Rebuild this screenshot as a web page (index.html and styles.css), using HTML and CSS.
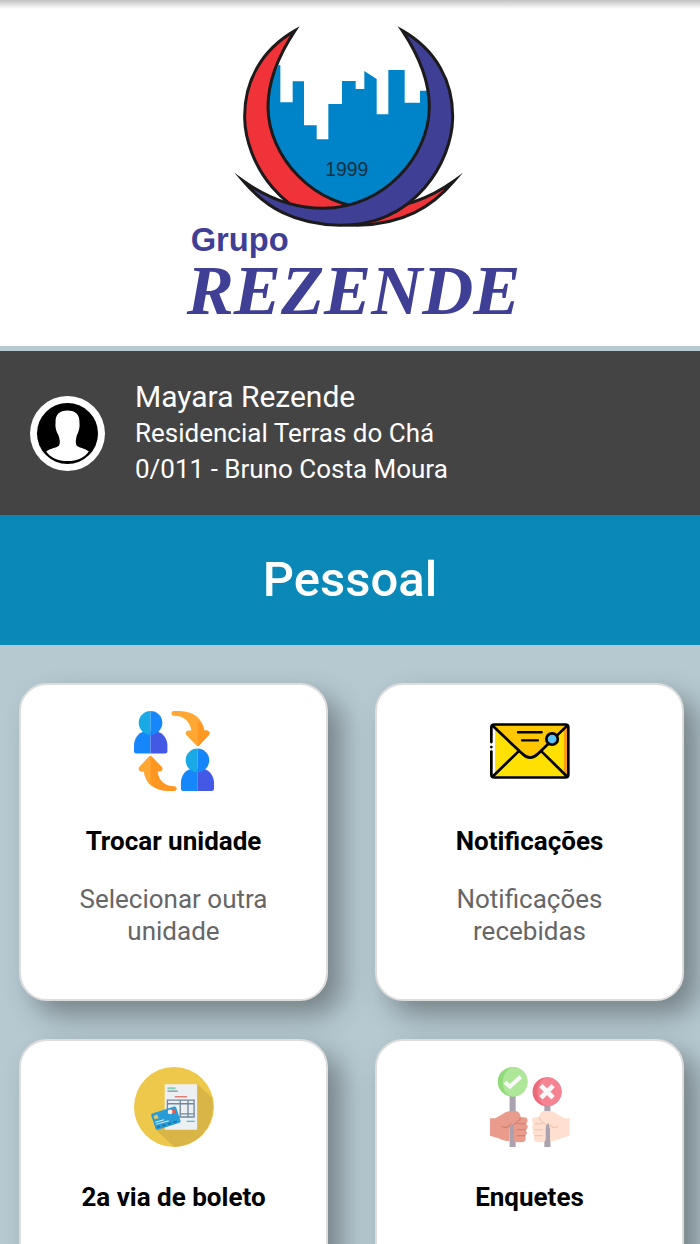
FILE: index.html
```html
<!DOCTYPE html>
<html lang="pt-BR">
<head>
  <meta charset="UTF-8" />
  <meta name="viewport" content="width=device-width, initial-scale=1" />
  <title>Grupo Rezende</title>
  <link rel="stylesheet" href="styles.css">
</head>
<body>
  <header class="topo">
    <svg class="logo" viewBox="0 0 1080 1038" role="img" aria-label="Grupo Rezende">
      <path fill="#0084c9" d="M326 195L331 195V307H368V244H402V376H440V418H475V312H516V243H557V267H583V213L620 237V343H655V210H704V308H750V272H776C790 470 660 600 536 616C400 600 290 470 292 330C292 280 310 220 326 195Z"/>
      <g stroke="#1d1a1b" stroke-width="9" stroke-linejoin="miter" stroke-miterlimit="12">
        <path fill="#ef3338" d="M375 92C274 150 222 245 224 355C226 480 332 676 562 676C700 673 785 622 852 543C775 598 692 625 612 625C432 625 294 470 294 320C294 240 330 160 375 92Z"/>
        <path fill="#3f4095" d="M697 92C798 150 850 245 848 355C846 480 740 676 510 676C372 673 287 622 220 543C297 598 380 625 460 625C640 625 778 470 778 320C778 240 742 160 697 92Z"/>
      </g>
      <text class="logo-ano" x="466" y="527">1999</text>
      <text class="logo-grupo" x="62" y="754">Grupo</text>
      <text class="logo-nome" x="50" y="942">REZENDE</text>
    </svg>
  </header>

  <section class="usuario">
    <svg class="avatar" viewBox="0 0 226 226" aria-hidden="true">
      <circle cx="113" cy="113" r="113" fill="#fff"/>
      <circle cx="113" cy="113" r="92" fill="#000"/>
      <path fill="#fff" d="M113 44C137 44 150 57 149 80C151 94 147 108 141 119C138 132 136 143 141 150C150 157 166 158 177 167C164 186 141 196 113 196C85 196 62 186 49 167C60 158 79 157 87 150C92 143 90 132 86 119C79 108 75 94 77 80C76 57 89 44 113 44Z"/>
    </svg>
    <div class="dados">
      <p class="nome">Mayara Rezende</p>
      <p>Residencial Terras do Chá</p>
      <p>0/011 - Bruno Costa Moura</p>
    </div>
  </section>

  <h1>Pessoal</h1>

  <main class="menu">
    <a class="card" href="#trocar-unidade">
      <svg class="icone" viewBox="45 33 237 237" aria-hidden="true">
        <path fill="#ffa733" d="M163 33H179C222 34 250 57 253 91H261C268 92 271 98 267 104L238 135Q234 139 230 135L200 104C196 98 200 91 207 91H215C211 64 193 47 163 47C154 46 154 34 163 33Z"/>
        <path fill="#ff9722" d="M234 62C246 70 252 80 253 91H261C268 92 271 98 267 104L238 135L234 138Z"/>
        <path fill="#ff9722" d="M164 270H144C103 268 77 246 75 212H67C60 211 57 205 61 199L90 168Q94 164 98 168L128 199C132 205 128 212 121 212H115C118 239 137 256 164 256C174 257 174 269 164 270Z"/>
        <path fill="#ffa733" d="M94 165V248C82 240 76 226 75 212H67C60 211 57 205 61 199L90 168Z"/>
        <path fill="#1687fb" d="M94 93H75C57 99 45 115 45 135V152Q45 159 52 159H94Z"/>
        <path fill="#4359e5" d="M94 93H113C131 99 144 115 144 135V152Q144 159 137 159H94Z"/>
        <path fill="#19aae5" d="M94 33A35 35 0 0 0 94 103Z"/>
        <path fill="#1687fb" d="M94 33A35 35 0 0 1 94 103Z"/>
        <path fill="#1687fb" d="M233 204H214C195 210 184 226 184 246V263Q184 270 191 270H233Z"/>
        <path fill="#4359e5" d="M233 204H252C270 210 282 226 282 246V263Q282 270 275 270H233Z"/>
        <path fill="#19aae5" d="M233 144A35 35 0 0 0 233 214Z"/>
        <path fill="#1687fb" d="M233 144A35 35 0 0 1 233 214Z"/>
      </svg>
      <h2>Trocar unidade</h2>
      <p>Selecionar outra unidade</p>
    </a>

    <a class="card" href="#notificacoes">
      <svg class="icone" viewBox="49 18 237 237" aria-hidden="true">
        <rect x="53" y="57" width="228" height="158" rx="8" fill="#ffe000"/>
        <path fill="#fff" d="M53 66L64 72V204L53 210Z"/>
        <path fill="#ff9d16" d="M268 70L281 62V212L268 200Z"/>
        <path fill="#fec800" d="M58 58H277L190 142Q168 166 146 142Z"/>
        <g fill="none" stroke="#000" stroke-width="8" stroke-linecap="round" stroke-linejoin="round">
          <path d="M53 110V66Q53 58 62 58H272Q281 58 281 66V207Q281 215 272 215H62Q53 215 53 207V138"/>
          <path d="M57 62L144 144Q168 168 192 144L277 62"/>
          <path d="M57 212L132 139M277 212L203 139"/>
          <path stroke-width="7" d="M132 81H202M144 105H191"/>
          <circle cx="233" cy="101" r="17" fill="#5bc3f8"/>
          <path d="M53 125V125"/>
        </g>
      </svg>
      <h2>Notificações</h2>
      <p>Notificações recebidas</p>
    </a>

    <a class="card" href="#boleto">
      <svg class="icone" viewBox="45 36 237 237" aria-hidden="true">
        <circle cx="163.500" cy="154.500" r="118.500" fill="#edc84a"/>
        <path fill="#d8b546" d="M232 87L276 126C289 185 259 264 164 273L109 221L136 160Z"/>
        <path fill="#ecf0f3" d="M136 87H232V222H136Z"/>
        <path fill="#85d2b6" d="M144 96H168V102H144Z"/>
        <path fill="#9aa9b8" d="M144 105H175V110H144Z"/>
        <path fill="#df756b" d="M166 122H202V126H166Z"/>
        <path fill="#5cb7dc" d="M201 195H225V199H201Z"/>
        <path fill="none" stroke="#71879b" stroke-width="4" d="M144 134H223V184H144ZM144 145H223M182 134V184M205 134V184M182 175H223"/>
        <path fill="#279cd6" d="M99 174L164 153Q168 152 170 156L183 196Q184 200 180 201L115 222Q111 223 109 219L96 180Q95 176 99 174Z"/>
        <path fill="#e5c75f" d="M103 181L114 177L118 188L106 191Z"/>
        <circle cx="161" cy="167" r="7" fill="#e45d50"/>
        <circle cx="152" cy="169" r="7" fill="#f5eef0"/>
        <path fill="none" stroke="#d8f1fc" stroke-width="3" d="M108 200L134 192M110 206L148 195"/>
        <path fill="none" stroke="#176da1" stroke-width="4" stroke-dasharray="10 7" d="M113 215L176 196"/>
      </svg>
      <h2>2a via de boleto</h2>
    </a>

    <a class="card" href="#enquetes">
      <svg class="icone" viewBox="49 36 237 237" aria-hidden="true">
        <path fill="#aaa2ae" d="M107 118H125V273H107ZM210 145H228V273H210Z"/>
        <circle cx="116" cy="80" r="44" fill="#91da78"/>
        <path fill="#aee69a" d="M116 36A44 44 0 0 1 116 124C76 115 78 48 116 36Z"/>
        <path fill="none" stroke="#f8f8f8" stroke-width="12" d="M93 81L108 94L140 65"/>
        <circle cx="218" cy="109" r="43" fill="#ec6b7b"/>
        <path fill="#f58392" d="M218 66A43 43 0 0 1 218 152C181 143 180 76 218 66Z"/>
        <path stroke="#f8f8f8" stroke-width="14" d="M200 91L236 127M236 91L200 127"/>
        <path fill="#e99b8c" d="M49 188H65L95 170Q103 166 113 166H126Q138 168 140 185H153Q162 187 160 197Q159 203 155 204Q163 209 160 217Q158 222 154 223Q161 228 157 236L153 240Q158 248 151 257Q146 260 129 259Q120 258 120 249V219Q120 207 112 202L107 222V255H98Q86 254 74 247L49 240Z"/>
        <path fill="none" stroke="#cf7c70" stroke-width="3" stroke-linecap="round" d="M140 186C138 198 124 200 120 207M84 212Q96 221 108 208M129 204H154M129 222H155M129 240H153"/>
        <path fill="#ffdfcf" d="M285 188H269L239 170Q231 166 221 166H208Q196 168 194 185H181Q172 187 174 197Q175 203 179 204Q171 209 174 217Q176 222 180 223Q173 228 177 236L181 240Q176 248 183 257Q188 260 205 259Q214 258 214 249V219Q214 207 222 202L227 222V255H236Q248 254 260 247L285 240Z"/>
        <path fill="none" stroke="#f2c2b1" stroke-width="3" stroke-linecap="round" d="M194 186C196 198 210 200 214 207M250 212Q238 221 226 208M180 204H205M179 222H205M181 240H205"/>
      </svg>
      <h2>Enquetes</h2>
    </a>
  </main>
</body>
</html>
```
FILE: styles.css
```css
* {
  box-sizing: border-box;
}

body {
  margin: 0;
  font-family: Roboto, sans-serif;
  background: #b6c9d1;
  color: #000;
}

h1, h2, p {
  margin: 0;
}

.topo {
  display: flex;
  justify-content: center;
  background: linear-gradient(#c2c2c2, #fff 9px);
  margin-bottom: 5px;
}

.logo {
  width: 360px;
  max-width: 100%;
}

.logo-ano {
  font: 58px "Liberation Sans", sans-serif;
  fill: #14303f;
}

.logo-grupo {
  font: bold 98px "Liberation Sans", sans-serif;
  fill: #3f4095;
}

.logo-nome {
  font: italic bold 212px "Liberation Serif", serif;
  fill: #3f4095;
}

.usuario {
  display: flex;
  align-items: center;
  gap: 30px;
  padding: 28px 30px;
  background: #444;
  color: #fff;
  font-size: 26px;
  line-height: 36px;
}

.avatar {
  width: 75px;
  flex-shrink: 0;
}

.nome {
  font-size: 30px;
}

h1 {
  padding: 35px 20px;
  background: #0a88b7;
  color: #fff;
  font-size: 49px;
  font-weight: 500;
  line-height: 60px;
  text-align: center;
}

.menu {
  display: grid;
  grid-template-columns: 1fr 1fr;
  grid-auto-rows: 1fr;
  gap: 38px 47px;
  padding: 38px 16px 38px 19px;
}

.card {
  display: flex;
  flex-direction: column;
  align-items: center;
  padding: 26px 40px 52px;
  background: #fff;
  border: 2px solid #ddd;
  border-radius: 28px;
  box-shadow: 14px 14px 28px rgba(0, 0, 0, 0.35);
  color: #000;
  text-align: center;
  text-decoration: none;
}

.icone {
  width: 80px;
  height: 80px;
}

h2 {
  margin: 34px 0 26px;
  font-size: 26px;
  font-weight: 700;
  line-height: 32px;
}

.card p {
  color: #666;
  font-size: 26px;
  line-height: 32px;
}
```
